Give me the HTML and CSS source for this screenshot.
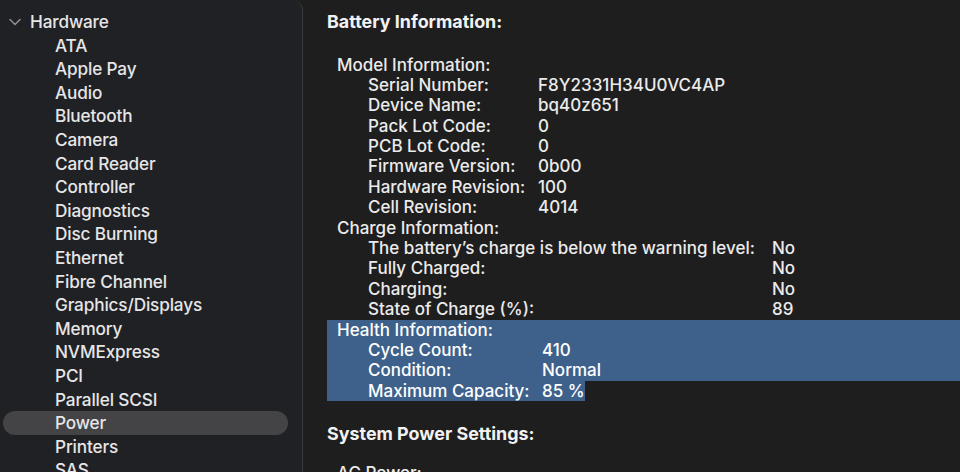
FILE: index.html
```html
<!DOCTYPE html>
<html>
<head>
<meta charset="utf-8">
<link rel="stylesheet" href="styles.css">
</head>
<body>
<div class="window">
  <aside class="sidebar">
    <div class="group">
      <svg class="chev" width="12" height="8" viewBox="0 0 12 8"><polyline points="1,1.5 6,6.5 11,1.5" fill="none" stroke="#8e8e92" stroke-width="1.6" stroke-linecap="round" stroke-linejoin="round"/></svg>
      <span>Hardware</span>
    </div>
    <div class="item">ATA</div>
    <div class="item">Apple Pay</div>
    <div class="item">Audio</div>
    <div class="item">Bluetooth</div>
    <div class="item">Camera</div>
    <div class="item">Card Reader</div>
    <div class="item">Controller</div>
    <div class="item">Diagnostics</div>
    <div class="item">Disc Burning</div>
    <div class="item">Ethernet</div>
    <div class="item">Fibre Channel</div>
    <div class="item">Graphics/Displays</div>
    <div class="item">Memory</div>
    <div class="item">NVMExpress</div>
    <div class="item">PCI</div>
    <div class="item">Parallel SCSI</div>
    <div class="item selected">Power</div>
    <div class="item">Printers</div>
    <div class="item">SAS</div>
  </aside>
  <main class="content">
    <h2 class="title">Battery Information:</h2>
    <div class="section model">
      <div class="row head">Model Information:</div>
      <div class="row sub"><span class="k">Serial Number:</span><span class="v">F8Y2331H34U0VC4AP</span></div>
      <div class="row sub"><span class="k">Device Name:</span><span class="v">bq40z651</span></div>
      <div class="row sub"><span class="k">Pack Lot Code:</span><span class="v">0</span></div>
      <div class="row sub"><span class="k">PCB Lot Code:</span><span class="v">0</span></div>
      <div class="row sub"><span class="k">Firmware Version:</span><span class="v">0b00</span></div>
      <div class="row sub"><span class="k">Hardware Revision:</span><span class="v">100</span></div>
      <div class="row sub"><span class="k">Cell Revision:</span><span class="v">4014</span></div>
    </div>
    <div class="section charge">
      <div class="row head">Charge Information:</div>
      <div class="row sub"><span class="k">The battery’s charge is below the warning level:</span><span class="v">No</span></div>
      <div class="row sub"><span class="k">Fully Charged:</span><span class="v">No</span></div>
      <div class="row sub"><span class="k">Charging:</span><span class="v">No</span></div>
      <div class="row sub"><span class="k">State of Charge (%):</span><span class="v">89</span></div>
    </div>
    <div class="section health">
      <div class="row head sel">Health Information:</div>
      <div class="row sub sel"><span class="k">Cycle Count:</span><span class="v">410</span></div>
      <div class="row sub sel"><span class="k">Condition:</span><span class="v">Normal</span></div>
      <div class="row sub sel last"><span class="k">Maximum Capacity:</span><span class="v">85 %</span></div>
    </div>
    <h2 class="title second">System Power Settings:</h2>
    <div class="section">
      <div class="row head">AC Power:</div>
    </div>
  </main>
</div>
</body>
</html>
```
FILE: styles.css
```css
html, body {
  margin: 0;
  padding: 0;
  height: 100%;
  background: #1e1e1e;
  overflow: hidden;
}

.window {
  display: flex;
  height: 472px;
  font-family: Inter, "Liberation Sans", sans-serif;
  -webkit-font-smoothing: antialiased;
}

.sidebar {
  width: 303px;
  flex: 0 0 303px;
  background: #202124;
  border-right: 1px solid #3a3a3d;
  border-top-right-radius: 10px;
  padding-top: 10px;
  box-sizing: border-box;
  color: #e6e6e8;
  font-size: 17.2px;
  font-weight: 500;
  letter-spacing: -0.15px;
}

.group {
  display: flex;
  align-items: center;
  height: 23.6px;
  padding-left: 9px;
  gap: 9px;
}

.chev {
  display: block;
  margin-top: 1px;
}

.item {
  height: 23.6px;
  line-height: 23.6px;
  margin: 0 14px 0 3px;
  padding-left: 52px;
  border-radius: 12px;
  white-space: nowrap;
}

.item.selected {
  background: #444446;
}

.content {
  flex: 1;
  padding-left: 24px;
  color: #ebebeb;
  font-size: 17px;
  font-weight: 500;
  letter-spacing: 0;
}

.title {
  margin: 0;
  font-size: 17.9px;
  font-weight: 700;
  line-height: 20px;
  padding-top: 12px;
  height: 20px;
  color: #f2f2f2;
}

.model {
  margin-top: 22.5px;
}

.title.second {
  margin-top: 22.5px;
  padding-top: 0;
}

.title.second + .section {
  margin-top: 19px;
}

.row {
  display: flex;
  height: 20.4px;
  line-height: 20.4px;
  white-space: nowrap;
}

.row.head {
  padding-left: 10px;
}

.row.sub {
  padding-left: 41px;
}

.k {
  flex: none;
}

.model .k {
  width: 170px;
}

.charge .k {
  width: 404px;
}

.health .k {
  width: 174px;
}

.sel {
  background: #3e618b;
  color: #ffffff;
}

.sel.last {
  width: fit-content;
}
```
